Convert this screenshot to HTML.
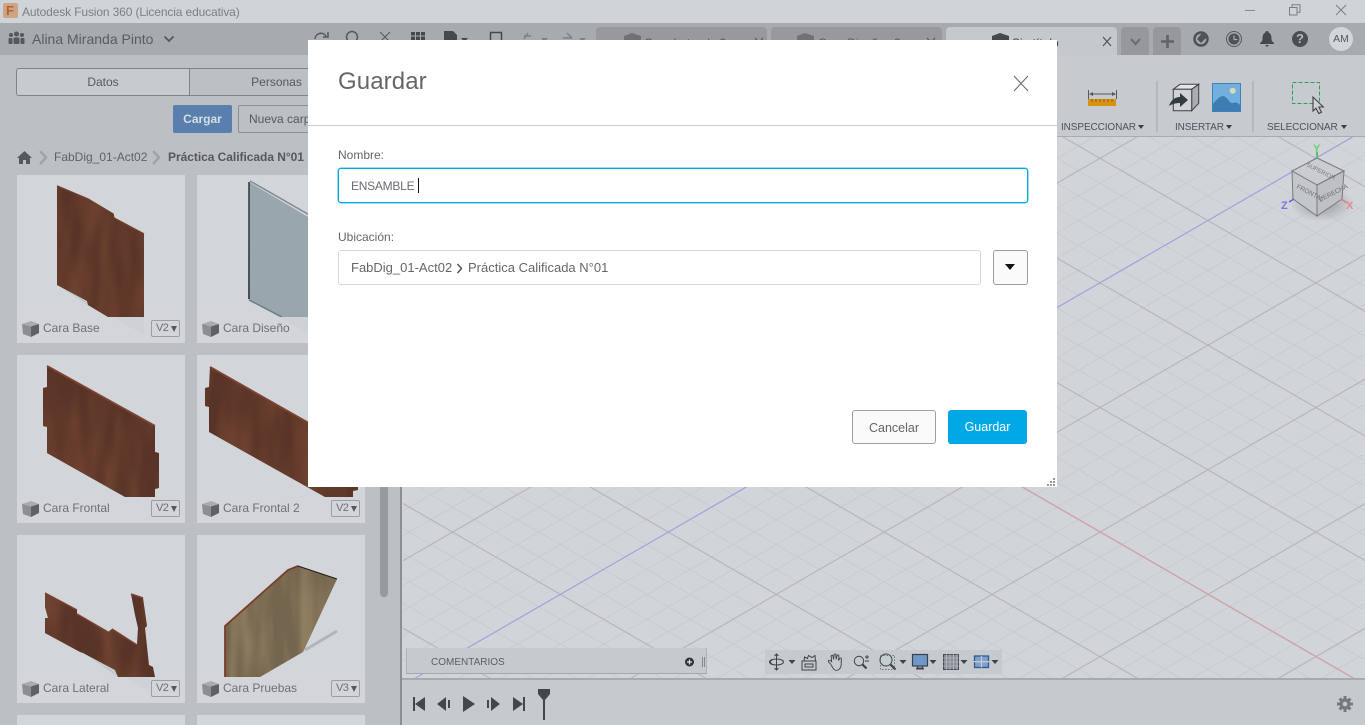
<!DOCTYPE html>
<html lang="es">
<head>
<meta charset="utf-8">
<title>Autodesk Fusion 360</title>
<style>
html,body{margin:0;padding:0;width:1365px;height:725px;overflow:hidden;background:#d1d4d9;font-family:"Liberation Sans",Arial,sans-serif}
#root{position:absolute;left:0;top:0;width:1365px;height:725px;overflow:hidden}
.a{position:absolute;white-space:nowrap}
svg{display:block;position:absolute;overflow:visible}
.card{position:absolute;width:168px;height:168px;background:#d2d5d9}
.foot{position:absolute;left:0;top:142px;width:168px;height:26px;background:rgba(210,213,217,.72)}
.foot span.n{position:absolute;left:26px;top:3px;font-size:12px;line-height:16px;color:#6d7075}
.foot svg{left:5px;top:4px}
.badge{position:absolute;left:134px;top:3px;width:27px;height:15px;border:1px solid #9b9ea3;border-radius:2px;font-size:11px;line-height:15px;color:#6d7075;text-indent:4px;letter-spacing:-.6px}
.badge:after{content:"";position:absolute;right:2px;top:5px;border-left:3.5px solid transparent;border-right:3.5px solid transparent;border-top:6px solid #55585c}
.lbl{font-size:10px;line-height:12px;color:#4b5160;letter-spacing:-.1px}
.car{position:absolute;border-left:3.5px solid transparent;border-right:3.5px solid transparent;border-top:4px solid #3c3f44}
.tab{position:absolute;top:27px;width:171px;height:28px;background:#98999d;border-radius:4px 4px 0 0}
</style>
</head>
<body>
<div id="root">

<!-- title bar -->
<div class="a" style="left:0;top:0;width:1365px;height:23px;background:#d0d3d8"></div>
<div class="a" style="left:3px;top:3px;width:15px;height:15px;background:#cda585;border-radius:2px"></div>
<div class="a" style="left:6px;top:3px;font:bold 13px/15px 'Liberation Sans',sans-serif;color:#b5622a">F</div>
<div class="a" style="left:22px;top:4px;font-size:12px;line-height:16px;color:#7c7f84;letter-spacing:-.13px">Autodesk Fusion 360 (Licencia educativa)</div>
<div class="a" style="left:1245px;top:10px;width:10px;height:1px;background:#85888c"></div>
<svg style="left:1289px;top:4px" width="12" height="12"><path d="M.5 3.500h7.500v7.500H.5zM3 3.500V.8h8v7.500H8" fill="none" stroke="#7b7e82"/></svg>
<svg style="left:1335px;top:4px" width="12" height="12"><path d="M1 1l10 10M11 1L1 11" stroke="#7b7e82"/></svg>

<!-- top dark strip -->
<div class="a" style="left:0;top:23px;width:1365px;height:32px;background:#a7aaae"></div>
<svg style="left:8px;top:31px" width="17" height="14"><g fill="#55585d"><circle cx="8.500" cy="3" r="2.500"/><circle cx="3" cy="4" r="2"/><circle cx="14" cy="4" r="2"/><rect x="5.500" y="6.500" width="6" height="6.500" rx="1"/><rect x=".5" y="7" width="4" height="6" rx="1"/><rect x="12.500" y="7" width="4" height="6" rx="1"/></g></svg>
<div class="a" style="left:32px;top:30px;font-size:14px;line-height:18px;color:#595c61">Alina Miranda Pinto</div>
<svg style="left:163px;top:35px" width="12" height="8"><path d="M1.500 1.500L6 6l4.500-4.500" fill="none" stroke="#55585d" stroke-width="1.800"/></svg>
<svg style="left:314px;top:30px" width="80" height="12"><path d="M1 9a6 6 0 0 1 11-3M14 2v5H9" fill="none" stroke="#55585d" stroke-width="1.500"/><circle cx="38" cy="7" r="5.500" fill="none" stroke="#55585d" stroke-width="1.500"/><path d="M66 2l10 10M76 2L66 12" stroke="#55585d"/></svg>

<!-- left sidebar -->
<div class="a" style="left:0;top:55px;width:400px;height:670px;background:#bcbfc4"></div>
<div class="a" style="left:16px;top:68px;width:172px;height:26px;background:#c7cacf;border:1px solid #7f8287;border-radius:3px 0 0 3px;text-align:center;font-size:12px;line-height:26px;color:#55585d">Datos</div>
<div class="a" style="left:189px;top:68px;width:175px;height:26px;border:1px solid #7f8287;border-left:0;text-align:center;font-size:12px;line-height:26px;color:#55585d">Personas</div>
<div class="a" style="left:173px;top:105px;width:59px;height:28px;background:#587fae;border-radius:2px;text-align:center;font-size:12px;font-weight:bold;line-height:28px;color:#d8dde4">Cargar</div>
<div class="a" style="left:238px;top:105px;width:100px;height:26px;border:1px solid #8b8e93;border-radius:2px;font-size:12px;line-height:26px;color:#55585d;text-indent:10px">Nueva carpeta</div>
<svg style="left:17px;top:150px" width="50" height="15"><path d="M7.500 1L0 8h2v6h4V10h3v4h4V8h2z" fill="#55585d"/><path d="M23 1l6 6.500-6 6.500" fill="none" stroke="#a0a3a8" stroke-width="2.500"/></svg>
<div class="a" style="left:54px;top:149px;font-size:12px;line-height:16px;color:#5f6267">FabDig_01-Act02</div>
<svg style="left:152px;top:150px" width="12" height="15"><path d="M1 1l6 6.500-6 6.500" fill="none" stroke="#a0a3a8" stroke-width="2.500"/></svg>
<div class="a" style="left:168px;top:149px;font-size:12px;font-weight:bold;line-height:16px;color:#55585d;letter-spacing:-.04px">Práctica Calificada N°01</div>

<!-- cards -->
<div class="card" style="left:17px;top:175px"></div>
<div class="card" style="left:197px;top:175px"></div>
<div class="card" style="left:17px;top:355px"></div>
<div class="card" style="left:197px;top:355px"></div>
<div class="card" style="left:17px;top:535px"></div>
<div class="card" style="left:197px;top:535px"></div>
<div class="card" style="left:17px;top:715px;height:10px"></div>
<div class="card" style="left:197px;top:715px;height:10px"></div>

<!-- thumbnails -->
<svg style="left:0;top:0" width="400" height="725" viewBox="0 0 400 725">
<defs>
<filter id="wood" x="0" y="0" width="1" height="1" color-interpolation-filters="sRGB">
<feTurbulence type="fractalNoise" baseFrequency=".05 .012" numOctaves="2" seed="7"/>
<feColorMatrix values="0 0 0 0 .46 0 0 0 0 .28 0 0 0 0 .20 1.800 0 0 0 -.6"/>
<feComposite in2="SourceGraphic" operator="in"/>
</filter>
<filter id="oak" x="0" y="0" width="1" height="1" color-interpolation-filters="sRGB">
<feTurbulence type="fractalNoise" baseFrequency=".07 .012" numOctaves="2" seed="3"/>
<feColorMatrix values="0 0 0 0 .56 0 0 0 0 .49 0 0 0 0 .38 2.200 0 0 0 -.8"/>
<feComposite in2="SourceGraphic" operator="in"/>
</filter>
<polygon id="p1" points="57,186 88,199 113,214 114,218 144,234 144,317 108,317 88,305 87,301 57,285"/>
<polygon id="p3" points="47,366 155,426 155,452 159,453 159,488 155,489 155,497 125,497 47,453 47,427 43,426 43,388 47,387"/>
<polygon id="p4" points="210,367 358,451 358,490 353,491 353,497 325,497 209,432 209,407 205,406 205,388 209,387"/>
<polygon id="p5" points="45,593 77,610 77,614 108,632 112,629 137,645 138,628 135,615 131,594 143,598 147,626 145,628 149,665 153,667 155,677 118,677 115,670 83,653 80,652 45,633 45,618 48,618 45,607"/>
<polygon id="p6" points="225,626 288,570 298,566 337,579 303,652 260,677 225,677"/>
</defs>
<polygon points="56,284 144,335 144,317 108,317 88,305" fill="#c3c7cc"/>
<polygon points="246,298 320,342 320,317 282,317" fill="#c3c7cc"/>
<polygon points="82,652 150,692 150,677 118,677" fill="#c3c7cc"/>
<path d="M305 650L337 631" stroke="#b2b5b9" stroke-width="3"/>
<use href="#p1" fill="#583327"/><use href="#p1" fill="#000" filter="url(#wood)"/>
<path d="M57 186L88 199 113 214 114 218 144 234" fill="none" stroke="#713c2c" stroke-width="1.500"/>
<polygon points="249,182 320,224 320,317 282,317 248,299" fill="#9aa6ae"/>
<path d="M249 182V299" stroke="#2c3338" stroke-width="1.500"/><path d="M250 181L320 221" stroke="#7f8b92" stroke-width="1.500"/><path d="M249 300L282 317" stroke="#6f7b82" stroke-width="1.500"/>
<use href="#p3" fill="#583327"/><use href="#p3" fill="#000" filter="url(#wood)"/>
<path d="M47 366L155 426" stroke="#7b4230" stroke-width="2"/>
<use href="#p4" fill="#583327"/><use href="#p4" fill="#000" filter="url(#wood)"/>
<path d="M210 367L358 451" stroke="#7b4230" stroke-width="2"/>
<use href="#p5" fill="#583327"/><use href="#p5" fill="#000" filter="url(#wood)"/>
<path d="M45 593L77 610M77 614L108 632M112 629L137 645M131 594L143 598" stroke="#7b4230" stroke-width="1.500"/>
<use href="#p6" fill="#74654e"/><use href="#p6" fill="#000" filter="url(#oak)"/>
<path d="M225 677V626L288 570 298 566" fill="none" stroke="#7a3d28" stroke-width="1.800"/><path d="M298 566L337 579" stroke="#1f1a15" stroke-width="1"/>
</svg>

<!-- card footers -->
<div class="card" style="left:17px;top:175px;background:none"><div class="foot"><svg width="17" height="16"><path d="M0 3l9-3 8 3-8 2.500z" fill="#a8abaf"/><path d="M0 3l9 2.500V16L1 13z" fill="#8b8e92"/><path d="M9 5.500L17 3v9l-8 4z" fill="#5e6166"/></svg><span class="n">Cara Base</span><div class="badge">V2</div></div></div>
<div class="card" style="left:197px;top:175px;background:none"><div class="foot"><svg width="17" height="16"><path d="M0 3l9-3 8 3-8 2.500z" fill="#a8abaf"/><path d="M0 3l9 2.500V16L1 13z" fill="#8b8e92"/><path d="M9 5.500L17 3v9l-8 4z" fill="#5e6166"/></svg><span class="n">Cara Diseño</span></div></div>
<div class="card" style="left:17px;top:355px;background:none"><div class="foot"><svg width="17" height="16"><path d="M0 3l9-3 8 3-8 2.500z" fill="#a8abaf"/><path d="M0 3l9 2.500V16L1 13z" fill="#8b8e92"/><path d="M9 5.500L17 3v9l-8 4z" fill="#5e6166"/></svg><span class="n">Cara Frontal</span><div class="badge">V2</div></div></div>
<div class="card" style="left:197px;top:355px;background:none"><div class="foot"><svg width="17" height="16"><path d="M0 3l9-3 8 3-8 2.500z" fill="#a8abaf"/><path d="M0 3l9 2.500V16L1 13z" fill="#8b8e92"/><path d="M9 5.500L17 3v9l-8 4z" fill="#5e6166"/></svg><span class="n">Cara Frontal 2</span><div class="badge">V2</div></div></div>
<div class="card" style="left:17px;top:535px;background:none"><div class="foot"><svg width="17" height="16"><path d="M0 3l9-3 8 3-8 2.500z" fill="#a8abaf"/><path d="M0 3l9 2.500V16L1 13z" fill="#8b8e92"/><path d="M9 5.500L17 3v9l-8 4z" fill="#5e6166"/></svg><span class="n">Cara Lateral</span><div class="badge">V2</div></div></div>
<div class="card" style="left:197px;top:535px;background:none"><div class="foot"><svg width="17" height="16"><path d="M0 3l9-3 8 3-8 2.500z" fill="#a8abaf"/><path d="M0 3l9 2.500V16L1 13z" fill="#8b8e92"/><path d="M9 5.500L17 3v9l-8 4z" fill="#5e6166"/></svg><span class="n">Cara Pruebas</span><div class="badge">V3</div></div></div>

<!-- sidebar scrollbar -->
<div class="a" style="left:380px;top:400px;width:8px;height:197px;background:#96999d;border-radius:0 0 4px 4px"></div>

<!-- canvas grid -->
<div class="a" style="left:403px;top:137px;width:962px;height:541px;background:#d1d4d9;overflow:hidden">
<svg style="left:0;top:0;overflow:hidden" width="962" height="541" viewBox="403 137 962 541">
<defs>
<pattern id="gMin" patternUnits="userSpaceOnUse" width="43.163" height="24.92" patternTransform="translate(1100 158.3)">
<path d="M-43.163 -24.92L86.326 49.84M-43.163 49.84L86.326 -24.92" stroke="#c6c9cd" stroke-width=".8" fill="none"/>
</pattern>
<pattern id="gMaj" patternUnits="userSpaceOnUse" width="215.815" height="124.6" patternTransform="translate(1100 158.3)">
<path d="M-215.815 -124.6L431.63 249.2M-215.815 249.2L431.63 -124.6" stroke="#aeb0b5" stroke-width=".9" fill="none"/>
</pattern>
<radialGradient id="sh"><stop offset="0" stop-color="#7d8085" stop-opacity=".75"/><stop offset="1" stop-color="#8a8d92" stop-opacity="0"/></radialGradient>
</defs>
<rect x="403" y="137" width="962" height="541" fill="url(#gMin)"/>
<rect x="403" y="137" width="962" height="541" fill="url(#gMaj)"/>
<path d="M415.4 678L1352.4 137" stroke="#9a9deb" stroke-width=".9" fill="none"/>
<path d="M1000 473.8L1353.7 678" stroke="#e39aa0" stroke-width=".9" fill="none"/>
<!-- view cube -->
<ellipse cx="1322" cy="204" rx="32" ry="18" fill="url(#sh)"/>
<path d="M1317 158L1344 171 1317 185 1292 171z" fill="#c9ccd1" stroke="#77797d"/>
<path d="M1292 171L1317 185V216L1293 199z" fill="#c3c6cb" stroke="#77797d"/>
<path d="M1344 171L1317 185V216L1342 199z" fill="#bdc0c5" stroke="#77797d"/>
<text x="0" y="0" transform="translate(1296 188) rotate(27)" font-size="6.500" fill="#6f7176" font-family="Liberation Sans">FRONTAL</text>
<text x="0" y="0" transform="translate(1320 202) rotate(-27)" font-size="6.500" fill="#6f7176" font-family="Liberation Sans">DERECHA</text>
<text x="0" y="0" transform="translate(1306 166) rotate(27)" font-size="6" fill="#7a7c81" font-family="Liberation Sans">SUPERIOR</text>
<path d="M1317 158V152" stroke="#57c45f" stroke-width="2"/>
<path d="M1294 199L1289 202" stroke="#5b60d8" stroke-width="1.500"/>
<path d="M1341 199L1347 203" stroke="#d97d85" stroke-width="1.500"/>
<text x="1313" y="152" font-size="11" font-weight="bold" fill="#6fcb78" font-family="Liberation Sans">Y</text>
<text x="1281" y="209" font-size="11" font-weight="bold" fill="#7479e0" font-family="Liberation Sans">Z</text>
<text x="1346" y="209" font-size="11" font-weight="bold" fill="#dd8d93" font-family="Liberation Sans">X</text>
</svg>
</div>
<div class="a" style="left:400px;top:55px;width:2px;height:670px;background:#8b8e92"></div>

<!-- toolbar -->
<div class="a" style="left:402px;top:55px;width:963px;height:81px;background:#c7cace"></div>
<div class="a" style="left:402px;top:136px;width:963px;height:1px;background:#a8abaf"></div>
<div class="a" style="left:1156px;top:81px;width:1.500px;height:51px;background:#b5b8bc"></div>
<div class="a" style="left:1252px;top:81px;width:1.500px;height:51px;background:#b5b8bc"></div>
<svg style="left:1088px;top:89px" width="29" height="18"><path d="M.5 1v9M28.500 1v9M2 5h25" fill="none" stroke="#55585d"/><path d="M1 5l4-2v4zM28 5l-4-2v4z" fill="#55585d"/><rect y="10" width="28" height="7" fill="#d9920f"/><path d="M4 10v3M8 10v3M12 10v3M16 10v3M20 10v3M24 10v3" stroke="#8a5f10"/></svg>
<div class="a lbl" style="left:1061px;top:122px">INSPECCIONAR</div><div class="car" style="left:1138px;top:125px"></div>
<svg style="left:1169px;top:83px" width="31" height="29"><path d="M4.300 6.300L11 1.300H29.700L22.700 6.300z" fill="#e2e4e6" stroke="#3d4045"/><path d="M22.700 6.300L29.700 1.300V20.300L22.700 27.700z" fill="#a9acb1" stroke="#3d4045"/><path d="M4.300 6.300H22.700V27.700H4.300z" fill="#d0d2d6" stroke="#3d4045"/><path d="M0 23c2-6 6-9 11-9V10l8 7-8 7v-4c-4 0-8 1-11 3z" fill="#343a44"/></svg>
<div class="a lbl" style="left:1175px;top:122px">INSERTAR</div><div class="car" style="left:1226px;top:125px"></div>
<svg style="left:1212px;top:83px" width="29" height="29"><rect width="29" height="29" fill="#72aede"/><path d="M0 22c4-5 8-9 11-9 4 0 6 7 9 7 3 0 5-2 9 3v6H0z" fill="#3c7eb2"/><rect x=".5" y=".5" width="28" height="28" fill="none" stroke="#3d83b8"/><circle cx="20.700" cy="7.700" r="3" fill="#d9dab8"/></svg>
<svg style="left:1291px;top:81px" width="36" height="35"><rect x="1.500" y="1.500" width="27" height="21" fill="none" stroke="#28a05a" stroke-dasharray="4 2"/><path d="M22 16v14l3-2.800 2.800 5.300 2.700-1.300-2.700-5.200h4.500z" fill="#cfd2d6" stroke="#3d4045" stroke-width="1.100"/></svg>
<div class="a lbl" style="left:1267px;top:122px">SELECCIONAR</div><div class="car" style="left:1341px;top:125px"></div>

<!-- tab bar -->
<svg style="left:410px;top:31px" width="180" height="12"><g fill="#45484c"><rect x="1" y="1" width="4" height="3.500"/><rect x="6" y="1" width="4" height="3.500"/><rect x="11" y="1" width="4" height="3.500"/><rect x="1" y="5.500" width="4" height="3.500"/><rect x="6" y="5.500" width="4" height="3.500"/><rect x="11" y="5.500" width="4" height="3.500"/><path d="M34 0h9l4 4v8H34z"/><path d="M51 7h7l-3.500 4z"/></g><rect x="80.500" y="1.500" width="11" height="10" fill="none" stroke="#45484c" stroke-width="1.500"/><path d="M114 8l4-6M114 5h7" stroke="#7d8085" stroke-width="1.500"/><path d="M131 7h7l-3.500 4zM169 7h7l-3.500 4z" fill="#7d8085"/><path d="M157 2l5 5M153 7h9" stroke="#7d8085" stroke-width="1.500"/></svg>
<div class="tab" style="left:596px"></div>
<div class="tab" style="left:771px"></div>
<div class="tab" style="left:946px;background:#c5c8cc"></div>
<svg style="left:624px;top:33px" width="17" height="8"><path d="M0 3l8-3 9 3v6H0z" fill="#6e7175"/></svg>
<svg style="left:797px;top:33px" width="17" height="8"><path d="M0 3l8-3 9 3v6H0z" fill="#6e7175"/></svg>
<div class="a" style="left:644px;top:36px;font-size:12px;line-height:14px;color:#55585d">Cara Lateral v2</div>
<div class="a" style="left:818px;top:36px;font-size:12px;line-height:14px;color:#55585d">Cara Diseño v2</div>
<svg style="left:754px;top:37px" width="10" height="4"><path d="M1 1l8 9M9 1l-8 9" stroke="#55585d" stroke-width="1.200"/></svg>
<svg style="left:926px;top:37px" width="10" height="4"><path d="M1 1l8 9M9 1l-8 9" stroke="#55585d" stroke-width="1.200"/></svg>
<div class="a" style="left:1012px;top:36px;font-size:12px;line-height:14px;color:#3f4246">Sin título</div>
<svg style="left:992px;top:33px" width="17" height="8"><path d="M0 3l8-3 9 3v6H0z" fill="#45484c"/></svg>
<svg style="left:1102px;top:36px" width="10" height="11"><path d="M1 1l8 9M9 1l-8 9" stroke="#55585d" stroke-width="1.300"/></svg>
<div class="a" style="left:1121px;top:27px;width:28px;height:28px;background:#96989c;border-radius:4px 4px 0 0"></div>
<svg style="left:1130px;top:38px" width="11" height="8"><path d="M1 1l4.500 5L10 1" fill="none" stroke="#6a6d71" stroke-width="2.200"/></svg>
<div class="a" style="left:1153px;top:27px;width:28px;height:28px;background:#96989c;border-radius:4px 4px 0 0"></div>
<svg style="left:1161px;top:35px" width="13" height="13"><path d="M6.500 0v13M0 6.500h13" stroke="#606367" stroke-width="2.600"/></svg>
<svg style="left:1193px;top:31px" width="16" height="16"><circle cx="8" cy="8" r="6.500" fill="none" stroke="#4f5256" stroke-width="2.500"/><path d="M9 2L14 6 8 12 4 8z" fill="#4f5256"/></svg>
<svg style="left:1226px;top:31px" width="16" height="16"><circle cx="8" cy="8" r="7.500" fill="none" stroke="#55585c"/><circle cx="8" cy="8" r="5.500" fill="#4f5256"/><path d="M8 4.500V8.500H11.500" fill="none" stroke="#a7aaae" stroke-width="1.200"/></svg>
<svg style="left:1260px;top:31px" width="14" height="16"><path d="M7 0a1.500 1.500 0 0 1 1.500 1.500C11 2.500 11.500 5 11.500 8c0 2 1 3 2.500 4v1H0v-1c1.500-1 2.500-2 2.500-4 0-3 .5-5.500 3-6.500A1.500 1.500 0 0 1 7 0zM5 14h4l-2 2z" fill="#45484c"/></svg>
<div class="a" style="left:1292px;top:31px;width:16px;height:16px;border-radius:50%;background:#4b4e52;color:#b6b9bd;font-size:13px;font-weight:bold;line-height:16px;text-align:center">?</div>
<div class="a" style="left:1329px;top:27px;width:24px;height:24px;border-radius:50%;background:#d2d5d9;color:#55585d;font-size:10.500px;line-height:24px;text-align:center">AM</div>

<!-- comments panel -->
<div class="a" style="left:406px;top:648px;width:299px;height:25px;background:#c6c9cd;border:1px solid #afb2b6;border-top:0;border-bottom:1px solid #a4a7ab"></div>
<div class="a" style="left:431px;top:656px;font-size:10px;line-height:13px;color:#5c6068">COMENTARIOS</div>
<svg style="left:684px;top:656px" width="22" height="12"><circle cx="5.500" cy="6" r="4.500" fill="#2f3236"/><path d="M5.500 3.500v5M3 6h5" stroke="#e3e5e7" stroke-width="1.200"/><path d="M18.500 1v10M20.500 1v10" stroke="#85888c"/></svg>

<!-- nav bar -->
<div class="a" style="left:765px;top:650px;width:237px;height:24px;background:#c6c9cd"></div>
<svg style="left:765px;top:650px" width="237" height="24">
<g fill="none" stroke="#3f4348" stroke-width="1">
<path d="M11.500 4v16M9.500 6l2-2 2 2M9.500 18l2 2 2-2"/><ellipse cx="11.500" cy="12" rx="7" ry="3"/><path d="M4.500 12l2.500-2.500M4.500 12L7 14.500" stroke-width="1.400"/>
<path d="M37 11h14v9H37zM39 11l.5-4 3 1.500 1-3 3.500 2 3-2 .5 5.500M40 14h8v3h-8z"/>
<path transform="translate(3 3.200) scale(.95 .78)" d="M66 14c-2-2-3-4-2-5 1-.5 2 1 3 2l-.5-7c0-2 2-2 2 0l.5 4 .5-6c.5-1.500 2-1.500 2 0l.2 6 1-5c.5-1.500 2-1 2 .5l-.5 6 1.500-3c1-1 2 0 1.500 1.500L77 15c0 3-2 7-5 7-3 0-4-4-6-8z"/>
<circle cx="94" cy="11" r="4.700"/><path d="M97.500 14.500l4 4" stroke-width="2.200"/><path d="M102 5v4M100 7h4M100 11h4" stroke-width=".9"/>
<circle cx="121" cy="10" r="6" fill="#c2ced2"/><path d="M125.500 14.500l5 5" stroke-width="2.200"/>
</g>
<rect x="115.500" y="5.500" width="14" height="14" fill="none" stroke="#55585d" stroke-dasharray="1.500 1.500" stroke-width=".7"/>
<rect x="147.500" y="4.500" width="15" height="11.500" fill="#6f97c7" stroke="#3c4048" stroke-width="1.200"/>
<path d="M153 16l-1 2h6l-1-2M151 19h8" fill="none" stroke="#3c4048"/>
<rect x="178.500" y="4.500" width="15" height="15" fill="#8b8e94" stroke="#454850"/>
<path d="M181.500 4v16M185 4v16M188.500 4v16M192 4v16M178 8h16M178 12h16M178 16h16" stroke="#c4c7cb" stroke-width=".6"/>
<rect x="209.500" y="6" width="14" height="11.500" fill="#7da0cc" stroke="#2f5a8f" stroke-width="1.300"/>
<path d="M216.500 6v11.500M209 11.700h15" stroke="#c6c9cd" stroke-width="1.300"/>
<g fill="#3f4348"><path d="M23.500 10h7l-3.500 4zM134.500 10h7l-3.500 4zM164.500 10h7l-3.500 4zM195.500 10h7l-3.500 4zM226.500 10h7l-3.500 4z"/></g>
</svg>

<!-- timeline -->
<div class="a" style="left:402px;top:678px;width:963px;height:2px;background:#a7aaae"></div>
<div class="a" style="left:402px;top:680px;width:963px;height:45px;background:#c6c9cd"></div>
<svg style="left:402px;top:681px" width="160" height="44"><g fill="#43464b"><path d="M11 16h2v14h-2zM13 23l10-7v14z"/><path d="M35 23l9-7v14zM46 19h2v8h-2z"/><path d="M61 15l12 8-12 8z"/><path d="M85 19h2v8h-2zM89 16l9 7-9 7z"/><path d="M111 16l10 7-10 7zM121 16h2v14h-2z"/><path d="M136 8h12v5l-5 6v20h-2V19l-5-6z"/></g></svg>
<svg style="left:1337px;top:696px" width="16" height="16"><g fill="#77797e"><circle cx="8" cy="8" r="5.500"/><path d="M6.500 0h3v3h-3zM6.500 13h3v3h-3zM0 6.500h3v3H0zM13 6.500h3v3h-3zM1.500 3.600L3.600 1.500 5.500 3.400 3.400 5.500zM10.500 12.600l2.100-2.100 1.900 1.900-2.100 2.100zM12.400 1.500l2.100 2.100-1.900 1.900-2.100-2.100zM3.400 10.500l2.100 2.100-1.900 1.900-2.100-2.100z"/></g><circle cx="8" cy="8" r="2.300" fill="#c6c9cd"/></svg>

<!-- modal -->
<div class="a" style="left:308px;top:40px;width:749px;height:447px;background:#fff"></div>
<div class="a" style="left:338px;top:68px;font-size:24px;line-height:28px;color:#666;letter-spacing:.1px">Guardar</div>
<svg style="left:1013px;top:75px" width="16" height="16"><path d="M1 1l14 15M15 1L1 16" stroke="#666" stroke-width="1"/></svg>
<div class="a" style="left:308px;top:125px;width:749px;height:1px;background:#ccc"></div>
<div class="a" style="left:338px;top:147px;font-size:12px;line-height:16px;color:#666">Nombre:</div>
<div class="a" style="left:338px;top:168px;width:688px;height:33px;border:1px solid #00a8e4;border-radius:3px;box-shadow:0 0 0 .4px #00a8e4"></div>
<div class="a" style="left:351px;top:178px;font-size:12px;line-height:16px;color:#6d6a75;letter-spacing:-.25px">ENSAMBLE</div>
<div class="a" style="left:418px;top:178px;width:1px;height:15px;background:#111"></div>
<div class="a" style="left:338px;top:229px;font-size:12px;line-height:16px;color:#666">Ubicación:</div>
<div class="a" style="left:338px;top:250px;width:641px;height:33px;border:1px solid #d8d8d8;border-radius:3px"></div>
<div class="a" style="left:351px;top:260px;font-size:13px;line-height:16px;color:#666">FabDig_01-Act02</div>
<svg style="left:456px;top:263px" width="7" height="11"><path d="M1.500 1l4 4.500-4 4.500" fill="none" stroke="#555" stroke-width="1.500"/></svg>
<div class="a" style="left:468px;top:260px;font-size:13px;line-height:16px;color:#666">Práctica Calificada N°01</div>
<div class="a" style="left:993px;top:250px;width:33px;height:33px;background:#fafafa;border:1px solid #9c9c9c;border-radius:3px"></div>
<div class="a" style="left:1005px;top:264px;border-left:5px solid transparent;border-right:5px solid transparent;border-top:6px solid #111"></div>
<div class="a" style="left:852px;top:410px;width:82px;height:32px;background:#fafafa;border:1px solid #a0a0a0;border-radius:3px;text-align:center;font-size:12.500px;line-height:34px;color:#666">Cancelar</div>
<div class="a" style="left:948px;top:410px;width:79px;height:34px;background:#00a8e6;border-radius:3px;text-align:center;font-size:12.500px;line-height:35px;color:#fff">Guardar</div>
<svg style="left:1046px;top:478px" width="10" height="9"><g fill="#9a9a9a"><rect x="7" y="0" width="2" height="2"/><rect x="4" y="3" width="2" height="2"/><rect x="7" y="3" width="2" height="2"/><rect x="1" y="6" width="2" height="2"/><rect x="4" y="6" width="2" height="2"/><rect x="7" y="6" width="2" height="2"/></g></svg>

</div>
</body>
</html>
